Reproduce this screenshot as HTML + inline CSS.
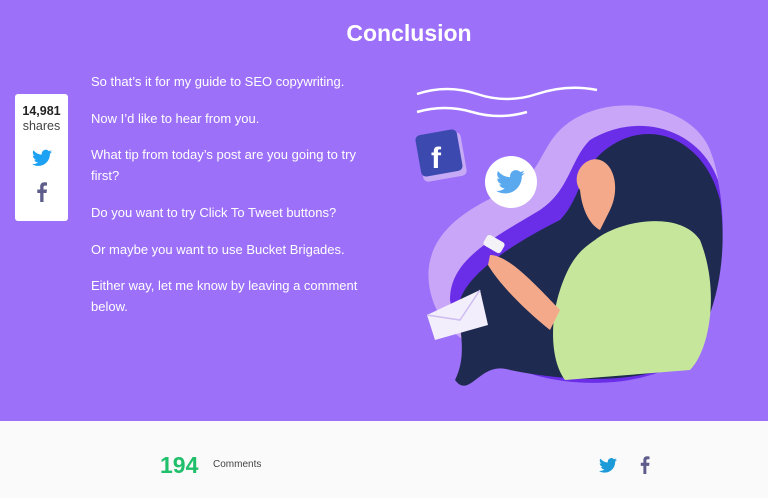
<!DOCTYPE html>
<html><head><meta charset="utf-8"><style>
*{margin:0;padding:0;box-sizing:border-box}
body{width:768px;height:498px;overflow:hidden;background:#fafafa;font-family:"Liberation Sans",sans-serif;position:relative}
.top{position:absolute;left:0;top:0;width:768px;height:421px;background:#9c70f9}
h1{position:absolute;left:0;width:818px;text-align:center;top:20px;color:#fff;font-size:23px;font-weight:bold}
.p{position:absolute;left:91px;color:#fff;font-size:13px;line-height:21px;width:290px}
.share{position:absolute;left:15px;top:94px;width:53px;height:127px;background:#fff;border-radius:3px;text-align:center}
.share b{display:block;font-size:12.5px;color:#222;margin-top:10px}
.share span{display:block;font-size:12.5px;color:#444;margin-top:1px}
.foot{position:absolute;top:452px;left:160px;color:#20bf6b;font-size:23px;font-weight:bold}
.fc{position:absolute;top:459px;left:213px;color:#444;font-size:10px}
</style></head><body>
<div class="top"></div>
<h1>Conclusion</h1>
<div class="p" style="top:71px">So that’s it for my guide to SEO copywriting.</div>
<div class="p" style="top:108px">Now I’d like to hear from you.</div>
<div class="p" style="top:144px">What tip from today’s post are you going to try first?</div>
<div class="p" style="top:202px">Do you want to try Click To Tweet buttons?</div>
<div class="p" style="top:239px">Or maybe you want to use Bucket Brigades.</div>
<div class="p" style="top:275px">Either way, let me know by leaving a comment below.</div>
<div class="share"><b>14,981</b><span>shares</span>
<svg width="20" height="18" viewBox="0 0 24 20" style="margin-top:16px"><path fill="#1da1f2" d="M24 2.4a9.8 9.8 0 0 1-2.8.8A5 5 0 0 0 23.3.5a9.9 9.9 0 0 1-3.1 1.2A4.9 4.9 0 0 0 11.8 6 14 14 0 0 1 1.7.9a4.9 4.9 0 0 0 1.5 6.6 4.9 4.9 0 0 1-2.2-.6 4.9 4.9 0 0 0 3.9 4.9 5 5 0 0 1-2.2.1 4.9 4.9 0 0 0 4.6 3.4A9.9 9.9 0 0 1 0 17.3 14 14 0 0 0 7.5 19.5c9 0 14-7.5 14-14v-.6A10 10 0 0 0 24 2.4z"/></svg>
<svg width="12" height="20" viewBox="0 0 10 20" style="display:block;margin:10px auto 0"><path fill="#5d5c8a" d="M6.5 20v-9h3l.5-3.5H6.5V5.3c0-1 .3-1.7 1.8-1.7H10V.5A24 24 0 0 0 7.4.3C4.9.3 3.2 1.8 3.2 4.6v2.9H.3V11h2.9v9z"/></svg>
</div>
<svg style="position:absolute;left:400px;top:70px" width="340" height="330" viewBox="0 0 340 330">
<path d="M17 24 q30-10 60 0 t60 0 t60-4" stroke="#fff" stroke-width="2.5" fill="none"/>
<path d="M17 42 q28-8 55 0 t55 0" stroke="#fff" stroke-width="2.5" fill="none"/>
<path d="M160 60 C200 20 290 30 310 80 C330 130 325 220 300 270 C270 310 200 320 150 300 C90 290 40 270 30 220 C20 170 60 140 110 120 C140 105 140 80 160 60Z" fill="#c9a6f7"/>
<path d="M190 70 C240 40 300 60 318 110 C330 170 318 240 290 285 C250 318 170 320 120 300 C80 290 55 260 50 230 C50 190 90 170 140 140 C170 120 170 90 190 70Z" fill="#6a2ee8"/>
<path d="M205 80 C250 45 305 70 320 130 C330 200 310 260 285 290 C240 315 170 312 110 300 C80 290 70 330 55 310 C70 280 55 250 60 230 C70 200 120 170 160 150 C180 130 180 100 205 80Z" fill="#1e2a4f"/>
<path d="M180 120 C170 105 185 85 200 90 C215 95 220 120 210 140 L200 160 C190 155 182 140 180 120Z" fill="#f4a98a"/>
<path d="M195 170 C220 150 280 140 300 170 C320 220 310 280 290 300 L165 310 C150 290 150 250 160 220 C170 190 180 180 195 170Z" fill="#c6e79b"/>
<path d="M90 185 C110 185 140 220 160 240 L150 260 C125 240 100 215 88 195Z" fill="#f4a98a"/>
<rect x="84" y="168" width="20" height="12" rx="3" transform="rotate(30 94 174)" fill="#f3f3f7"/>
<circle cx="111" cy="112" r="26" fill="#fff"/>
<path transform="translate(96 100) scale(1.2)" fill="#5aa8ee" d="M24 2.4a9.8 9.8 0 0 1-2.8.8A5 5 0 0 0 23.3.5a9.9 9.9 0 0 1-3.1 1.2A4.9 4.9 0 0 0 11.8 6 14 14 0 0 1 1.7.9a4.9 4.9 0 0 0 1.5 6.6 4.9 4.9 0 0 1-2.2-.6 4.9 4.9 0 0 0 3.9 4.9 5 5 0 0 1-2.2.1 4.9 4.9 0 0 0 4.6 3.4A9.9 9.9 0 0 1 0 17.3 14 14 0 0 0 7.5 19.5c9 0 14-7.5 14-14v-.6A10 10 0 0 0 24 2.4z"/>
<rect x="20" y="65" width="44" height="44" rx="5" transform="rotate(-10 42 87)" fill="#c7aaf5"/>
<rect x="18" y="62" width="42" height="42" rx="5" transform="rotate(-10 39 83)" fill="#3c4ab0"/>
<text x="31" y="98" fill="#fff" font-size="30" font-weight="bold" font-family="Liberation Sans">f</text>
<path d="M27 245 L80 220 L88 255 L35 270Z" fill="#f3eefc"/>
<path d="M27 245 L60 250 L80 220" stroke="#cdbdf0" stroke-width="1.5" fill="none"/>
</svg>
<div class="foot">194</div><div class="fc">Comments</div>
<svg style="position:absolute;left:599px;top:458px" width="18" height="15" viewBox="0 0 24 20"><path fill="#1d9bd8" d="M24 2.4a9.8 9.8 0 0 1-2.8.8A5 5 0 0 0 23.3.5a9.9 9.9 0 0 1-3.1 1.2A4.9 4.9 0 0 0 11.8 6 14 14 0 0 1 1.7.9a4.9 4.9 0 0 0 1.5 6.6 4.9 4.9 0 0 1-2.2-.6 4.9 4.9 0 0 0 3.9 4.9 5 5 0 0 1-2.2.1 4.9 4.9 0 0 0 4.6 3.4A9.9 9.9 0 0 1 0 17.3 14 14 0 0 0 7.5 19.5c9 0 14-7.5 14-14v-.6A10 10 0 0 0 24 2.4z"/></svg>
<svg style="position:absolute;left:640px;top:456px" width="10" height="18" viewBox="0 0 10 20"><path fill="#5d5c8a" d="M6.5 20v-9h3l.5-3.5H6.5V5.3c0-1 .3-1.7 1.8-1.7H10V.5A24 24 0 0 0 7.4.3C4.9.3 3.2 1.8 3.2 4.6v2.9H.3V11h2.9v9z"/></svg>
</body></html>
